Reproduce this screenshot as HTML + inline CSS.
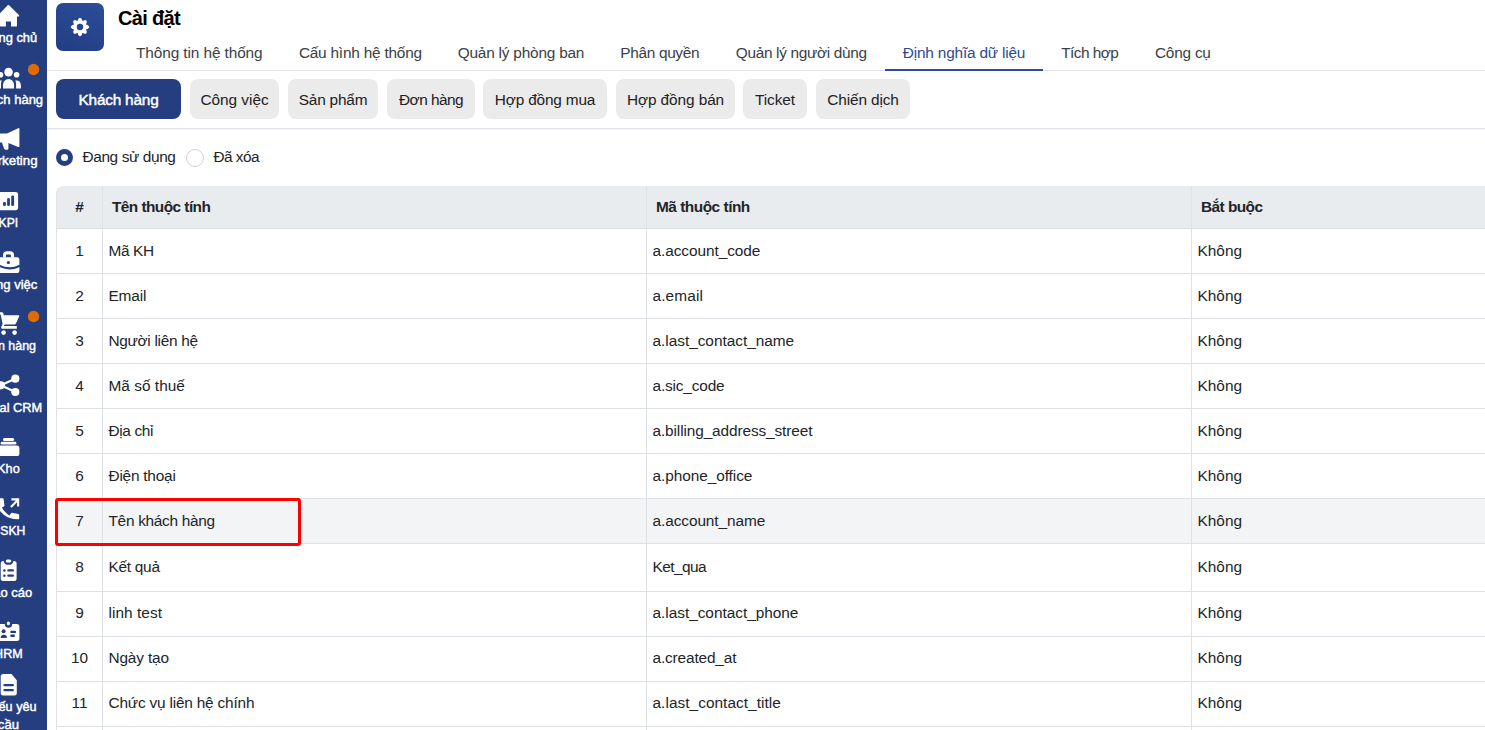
<!DOCTYPE html>
<html lang="vi">
<head>
<meta charset="utf-8">
<title>Cài đặt</title>
<style>
*{box-sizing:border-box;margin:0;padding:0}
html,body{width:1485px;height:730px;overflow:hidden;background:#fff}
body{font-family:"Liberation Sans",sans-serif;color:#212529;position:relative;font-size:15.4px}
.abs{position:absolute;white-space:nowrap}
#side{position:absolute;left:0;top:0;width:47px;height:730px;background:#243e80;overflow:hidden}
#side svg{position:absolute}
#ico{position:absolute;left:56px;top:3px;width:48px;height:48px;border-radius:7px;overflow:hidden;background:linear-gradient(200deg,#2c4d99 0%,#233d82 100%)}
#title{position:absolute;left:118px;top:6px;font-size:20px;font-weight:bold;color:#000;line-height:24px;white-space:nowrap}
#tabs{position:absolute;left:117.6px;top:34px;height:37px;display:flex;z-index:2}
#tabs .t{height:37px;line-height:37px;font-size:15.4px;color:#3b4046;white-space:nowrap;text-align:center;border-bottom:2px solid transparent;flex:none}
#tabs .t.on{color:#2c4a92;border-bottom-color:#2c4a92}
#hline{position:absolute;left:47px;right:0;top:70px;height:1px;background:#e2e4e9}
#pills{position:absolute;left:0;top:79px;height:40px}
#pills .p{position:absolute;top:0;height:40px;border-radius:8px;background:#ebebeb;color:#222;font-size:15.4px;line-height:41px;text-align:center;white-space:nowrap}
#pills .p.on{background:#243e80;color:#fff;-webkit-text-stroke:0.45px #fff}
#pline{position:absolute;left:47px;right:0;top:128px;height:2px;background:linear-gradient(#e1e2e8 50%,#f6f6f8 50%)}
.radio{position:absolute;width:17px;height:17px;border-radius:50%;border:1px solid #ced3db;background:#fff}
.radio.on{border:5.7px solid #243e80}
#tbl{position:absolute;left:56px;top:186px;width:1500px;border-collapse:separate;border-spacing:0;table-layout:fixed;font-size:15.4px}
#tbl th,#tbl td{border-bottom:1px solid #dee2e6;border-left:1px solid #dee2e6;white-space:nowrap;overflow:hidden;vertical-align:middle}
#tbl th{height:43px;background:#e9ecef;text-align:left;padding:0 0 0 9px;font-weight:bold;color:#212529}
#tbl td{height:45px;padding:0 0 1px 5.5px;color:#212529}
#tbl th:first-child{border-top-left-radius:8px;text-align:center;padding:0}
#tbl td:first-child{text-align:center;padding:0 0 1px 0}
#tbl tr.hov td{background:#f3f4f6}
#tbl tr.tall td{height:47.5px;padding-bottom:0.5px}
#mark{position:absolute;left:55px;top:498px;width:246px;height:48px;border:3px solid #fe0000;border-radius:3px}

</style>
</head>
<body>
<div id="side">
<svg width="47" height="730" viewBox="0 0 47 730" style="left:0;top:0">
<g fill="#fff" stroke="none">
<!-- home -->
<path d="M7.7 5.3 Q8.4 4.6 9.1 5.3 L18.9 14.9 Q19.9 16.6 18.2 16.6 L17 16.6 L17 25.4 Q17 26.6 15.8 26.6 L11 26.6 L11 21.4 L5.9 21.4 L5.9 26.6 L1.2 26.6 Q0 26.6 0 25.4 L0 16.6 L-3.2 16.6 Z"/>
<!-- users -->
<circle cx="8.55" cy="72.1" r="4.3"/>
<path d="M3 88.4 L3 85 A5.55 6.1 0 0 1 14.1 85 L14.1 88.4 Z"/>
<circle cx="16.6" cy="74.8" r="2.8"/>
<path d="M16.1 88.4 L16.1 83.6 Q16 81.6 15.2 80.5 Q20.9 79.8 20.9 85.6 L20.9 88.4 Z"/>
<circle cx="0.5" cy="74.8" r="2.8"/>
<path d="M1 88.4 L1 83.6 Q1.1 81.6 1.9 80.5 Q-3.8 79.8 -3.8 85.6 L-3.8 88.4 Z"/>
<!-- megaphone -->
<path d="M19.4 128.8 Q19.4 127.6 18.2 128.2 L6.9 133.5 L-2 133.5 L-2 142.4 L2 142.4 L4 148.6 Q4.4 149.7 5.6 149.7 L7.2 149.7 Q8.4 149.7 8.4 148.5 L8.4 143.1 L18.2 146.9 Q19.4 147.4 19.4 146.2 Z"/>
<!-- kpi -->
<rect x="-1.3" y="191.9" width="19.4" height="18.3" rx="2.6"/>
<!-- briefcase -->
<path d="M3 257.5 L3 255.4 Q3 251.3 7 251.3 L10.1 251.3 Q14.1 251.3 14.1 255.4 L14.1 257.5 L10.9 257.5 L10.9 255.3 Q10.9 254.5 10.1 254.5 L6.7 254.5 Q5.9 254.5 5.9 255.3 L5.9 257.5 Z"/>
<rect x="-2.6" y="257.2" width="22" height="15.7" rx="2.2"/>
<!-- cart -->
<path d="M-2 312.3 L2 312.3 Q3 312.3 3.3 313.3 L3.8 315.2 L18.4 315.2 Q19.6 315.2 19.2 316.3 L16 323.6 Q15.6 324.4 14.7 324.4 L4.6 324.4 L3.9 325.9 L16.8 325.9 L16.8 328.7 L2.6 328.7 Q0.6 328.7 1.4 326.6 L2.6 323.9 L0.6 314.6 L-2 314.6 Z"/>
<circle cx="3.6" cy="332.6" r="2.3"/>
<circle cx="14.6" cy="332.6" r="2.3"/>
<!-- share -->
<circle cx="15.3" cy="378.7" r="4.1"/>
<circle cx="15.3" cy="392" r="4.1"/>
<circle cx="0.8" cy="385.3" r="4.1"/>
<path d="M0.8 385.3 L15.3 378.7 M0.8 385.3 L15.3 392" stroke="#fff" stroke-width="2.3" fill="none"/>
<!-- kho -->
<rect x="3" y="437.9" width="11.1" height="3" rx="1.5"/>
<rect x="0.7" y="441.8" width="15.7" height="2.7" rx="1.35"/>
<rect x="-2.6" y="445.5" width="22" height="10.5" rx="2.6"/>
<!-- phone -->
<path d="M-1 498.2 L2.8 498.2 Q3.5 498.2 3.6 499 L4.4 505.3 Q4.5 506 3.9 506.4 L2 507.6 Q3.2 510.4 5.3 512.1 Q7.2 514.2 9.4 515.6 L11 513.2 Q11.3 512.7 12 512.8 L18.3 513.9 Q19.2 514.1 19.2 515 L19.2 518.3 Q19.2 519.3 18.2 519.3 Q9 519.2 3.5 514.5 Q1 512.3 -1 510 Z"/>
<path d="M10.9 507 L17.6 500.3 M11.4 499.4 L18.15 499.4 L18.15 506.4" stroke="#fff" stroke-width="2.1" fill="none" stroke-linecap="butt"/>
<!-- clipboard -->
<path d="M3.2 560.9 Q0.7 560.9 0.7 563.4 L0.7 578.6 Q0.7 581.1 3.2 581.1 L14.1 581.1 Q16.6 581.1 16.6 578.6 L16.6 563.4 Q16.6 560.9 14.1 560.9 L13.4 560.9 A4.9 4.6 0 0 1 3.7 560.9 Z"/>
<rect x="5.8" y="559.5" width="5.5" height="3.1" rx="1.55"/>
<!-- hrm -->
<path d="M0 623.9 L4.9 623.9 A3.65 3.8 0 0 0 12.2 623.9 L16.9 623.9 Q19.4 623.9 19.4 626.4 L19.4 638.5 Q19.4 641 16.9 641 L-3 641 L-3 623.9 Z"/>
<rect x="6.9" y="621.5" width="3" height="3.8" rx="1.5"/>
<!-- file -->
<path d="M3.2 674.1 L11.5 674.1 L16.8 680.3 L16.8 693 Q16.8 695.5 14.3 695.5 L3.2 695.5 Q0.7 695.5 0.7 693 L0.7 676.6 Q0.7 674.1 3.2 674.1 Z"/>
</g>
<g fill="#243e80" stroke="none">
<!-- kpi bars -->
<rect x="3" y="202" width="2.9" height="4" rx="1.3"/>
<rect x="7.1" y="198.1" width="2.8" height="7.9" rx="1.3"/>
<rect x="11.2" y="195.5" width="2.9" height="10.5" rx="1.3"/>
<!-- briefcase -->
<circle cx="8.4" cy="262.5" r="1.6"/>
<path d="M-3 264.6 Q8.4 271.6 20 265.8" stroke="#243e80" stroke-width="2.1" fill="none"/>
<!-- clipboard lines -->
<circle cx="4.4" cy="570.4" r="1.25"/><circle cx="4.4" cy="575.7" r="1.25"/>
<rect x="7.2" y="569.25" width="6.8" height="2.3" rx="1.15"/>
<rect x="7.2" y="574.55" width="6.8" height="2.3" rx="1.15"/>
<!-- hrm details -->
<circle cx="3.6" cy="631.2" r="2"/>
<path d="M0.7 638 Q0.7 634.7 3.8 634.7 Q6.9 634.7 6.9 638 Z"/>
<rect x="10.2" y="630.7" width="5.9" height="2.4" rx="1.2"/>
<rect x="10.2" y="634.5" width="4.8" height="2.4" rx="1.2"/>
<!-- file lines -->
<rect x="3.3" y="684.05" width="10.7" height="2.3" rx="1.15"/>
<rect x="3.3" y="688.95" width="10.7" height="2.3" rx="1.15"/>
</g>
<circle cx="33.55" cy="69.5" r="5.7" fill="#e06c00"/>
<circle cx="33.55" cy="316.5" r="5.7" fill="#e06c00"/>
<g fill="#fff" font-family="Liberation Sans, sans-serif" font-size="13.3" text-anchor="middle" stroke="#fff" stroke-width="0.45">
<text x="8.4" y="41.90" textLength="57.6" lengthAdjust="spacingAndGlyphs">Trang chủ</text>
<text x="8.4" y="103.70" textLength="69.4" lengthAdjust="spacingAndGlyphs">Khách hàng</text>
<text x="8.4" y="165.00" textLength="58.4" lengthAdjust="spacingAndGlyphs">Marketing</text>
<text x="8.4" y="227.30" textLength="19.6" lengthAdjust="spacingAndGlyphs">KPI</text>
<text x="8.4" y="289.30" textLength="58" lengthAdjust="spacingAndGlyphs">Công việc</text>
<text x="8.4" y="350.05" textLength="55.2" lengthAdjust="spacingAndGlyphs">Đơn hàng</text>
<text x="8.4" y="412.05" textLength="67.4" lengthAdjust="spacingAndGlyphs">Social CRM</text>
<text x="8.4" y="473.10" textLength="22.6" lengthAdjust="spacingAndGlyphs">Kho</text>
<text x="8.4" y="535.10" textLength="33.8" lengthAdjust="spacingAndGlyphs">CSKH</text>
<text x="8.4" y="597.10" textLength="47.6" lengthAdjust="spacingAndGlyphs">Báo cáo</text>
<text x="8.4" y="658.10" textLength="28.6" lengthAdjust="spacingAndGlyphs">HRM</text>
<text x="8.4" y="711.20" textLength="56.4" lengthAdjust="spacingAndGlyphs">Phiếu yêu</text>
<text x="8.4" y="729.30" textLength="21.2" lengthAdjust="spacingAndGlyphs">cầu</text>
</g>
</svg>
</div>
<div id="ico"><svg width="48" height="48" viewBox="56 3 48 48" style="display:block"><g fill="#fff"><rect x="73.3" y="20.3" width="13.4" height="13.4" rx="1.1"/><rect x="73.2" y="20.2" width="13.6" height="13.6" rx="1" transform="rotate(45 80 27)"/></g><g fill="#27458c"><circle cx="87.16" cy="29.97" r="1.05"/><circle cx="82.97" cy="34.16" r="1.05"/><circle cx="77.03" cy="34.16" r="1.05"/><circle cx="72.84" cy="29.97" r="1.05"/><circle cx="72.84" cy="24.03" r="1.05"/><circle cx="77.03" cy="19.84" r="1.05"/><circle cx="82.97" cy="19.84" r="1.05"/><circle cx="87.16" cy="24.03" r="1.05"/><circle cx="80" cy="27" r="3.2"/></g></svg></div>

<div id="title"><span id="ttl" style="letter-spacing:-0.667px">Cài đặt</span></div>
<div id="tabs">
<div class="t" style="width:163.4px"><span id="tab0" style="letter-spacing:-0.106px">Thông tin hệ thống</span></div>
<div class="t" style="width:158.8px"><span id="tab1" style="letter-spacing:-0.214px">Cấu hình hệ thống</span></div>
<div class="t" style="width:162.4px"><span id="tab2" style="letter-spacing:-0.214px">Quản lý phòng ban</span></div>
<div class="t" style="width:115.2px"><span id="tab3" style="letter-spacing:-0.333px">Phân quyền</span></div>
<div class="t" style="width:167.8px"><span id="tab4" style="letter-spacing:-0.330px">Quản lý người dùng</span></div>
<div class="t on" style="width:157.7px"><span id="tab5" style="letter-spacing:-0.189px">Định nghĩa dữ liệu</span></div>
<div class="t" style="width:93.9px"><span id="tab6" style="letter-spacing:-0.550px">Tích hợp</span></div>
<div class="t" style="width:92.2px"><span id="tab7" style="letter-spacing:-0.234px">Công cụ</span></div>
</div>
<div id="hline"></div>
<div id="pills">
<div class="p on" style="left:56px;width:125px"><span id="pill0" style="letter-spacing:-0.222px">Khách hàng</span></div>
<div class="p" style="left:190px;width:89px"><span id="pill1" style="letter-spacing:-0.022px">Công việc</span></div>
<div class="p" style="left:288px;width:90px"><span id="pill2" style="letter-spacing:-0.201px">Sản phẩm</span></div>
<div class="p" style="left:387px;width:88px"><span id="pill3" style="letter-spacing:-0.550px">Đơn hàng</span></div>
<div class="p" style="left:483px;width:124px"><span id="pill4" style="letter-spacing:-0.182px">Hợp đồng mua</span></div>
<div class="p" style="left:616px;width:119px"><span id="pill5" style="letter-spacing:-0.091px">Hợp đồng bán</span></div>
<div class="p" style="left:743px;width:64px"><span id="pill6" style="letter-spacing:-0.080px">Ticket</span></div>
<div class="p" style="left:816px;width:94px"><span id="pill7" style="letter-spacing:-0.112px">Chiến dịch</span></div>
</div>
<div id="pline"></div>
<div class="radio on" style="left:56px;top:149px"></div>
<div class="abs" style="left:82.5px;top:148px;line-height:18px"><span id="r1" style="letter-spacing:-0.381px">Đang sử dụng</span></div>
<div class="radio" style="left:186px;top:148.5px;width:18px;height:18px"></div>
<div class="abs" style="left:213.5px;top:148px;line-height:18px"><span id="r2" style="letter-spacing:-0.550px">Đã xóa</span></div>
<table id="tbl">
<colgroup><col style="width:46px"><col style="width:544px"><col style="width:545px"><col style="width:365px"></colgroup>
<thead><tr><th>#</th><th><span id="h1" style="letter-spacing:-0.550px">Tên thuộc tính</span></th><th><span id="h2" style="letter-spacing:-0.482px">Mã thuộc tính</span></th><th><span id="h3" style="letter-spacing:-0.550px">Bắt buộc</span></th></tr></thead>
<tbody>
<tr><td>1</td><td><span id="a0" style="letter-spacing:-0.350px">Mã KH</span></td><td><span id="b0" style="letter-spacing:-0.061px">a.account_code</span></td><td><span id="c0">Không</span></td></tr>
<tr><td>2</td><td><span id="a1" style="letter-spacing:-0.150px">Email</span></td><td><span id="b1" style="letter-spacing:0.133px">a.email</span></td><td><span style="letter-spacing:0.000px">Không</span></td></tr>
<tr><td>3</td><td><span id="a2" style="letter-spacing:-0.300px">Người liên hệ</span></td><td><span id="b2" style="letter-spacing:-0.021px">a.last_contact_name</span></td><td><span style="letter-spacing:0.000px">Không</span></td></tr>
<tr><td>4</td><td><span id="a3" style="letter-spacing:0.024px">Mã số thuế</span></td><td><span id="b3" style="letter-spacing:-0.156px">a.sic_code</span></td><td><span style="letter-spacing:0.000px">Không</span></td></tr>
<tr><td>5</td><td><span id="a4" style="letter-spacing:-0.366px">Địa chỉ</span></td><td><span id="b4" style="letter-spacing:-0.114px">a.billing_address_street</span></td><td><span style="letter-spacing:0.000px">Không</span></td></tr>
<tr><td>6</td><td><span id="a5" style="letter-spacing:-0.222px">Điện thoại</span></td><td><span id="b5" style="letter-spacing:-0.063px">a.phone_office</span></td><td><span style="letter-spacing:0.000px">Không</span></td></tr>
<tr class="hov"><td>7</td><td><span id="a6" style="letter-spacing:-0.292px">Tên khách hàng</span></td><td><span id="b6" style="letter-spacing:-0.077px">a.account_name</span></td><td><span style="letter-spacing:0.000px">Không</span></td></tr>
<tr class="tall"><td>8</td><td><span id="a7" style="letter-spacing:-0.266px">Kết quả</span></td><td><span id="b7" style="letter-spacing:-0.533px">Ket_qua</span></td><td><span style="letter-spacing:0.000px">Không</span></td></tr>
<tr><td>9</td><td><span id="a8" style="letter-spacing:0.053px">linh test</span></td><td><span id="b8" style="letter-spacing:-0.022px">a.last_contact_phone</span></td><td><span style="letter-spacing:0.000px">Không</span></td></tr>
<tr><td>10</td><td><span id="a9" style="letter-spacing:-0.158px">Ngày tạo</span></td><td><span id="b9" style="letter-spacing:-0.145px">a.created_at</span></td><td><span style="letter-spacing:0.000px">Không</span></td></tr>
<tr><td>11</td><td><span id="a10" style="letter-spacing:-0.190px">Chức vụ liên hệ chính</span></td><td><span id="b10" style="letter-spacing:0.042px">a.last_contact_title</span></td><td><span style="letter-spacing:0.000px">Không</span></td></tr>
<tr><td>12</td><td>Website</td><td>a.website</td><td><span style="letter-spacing:0.000px">Không</span></td></tr>
</tbody>
</table>
<div id="mark"></div>
</body>
</html>
